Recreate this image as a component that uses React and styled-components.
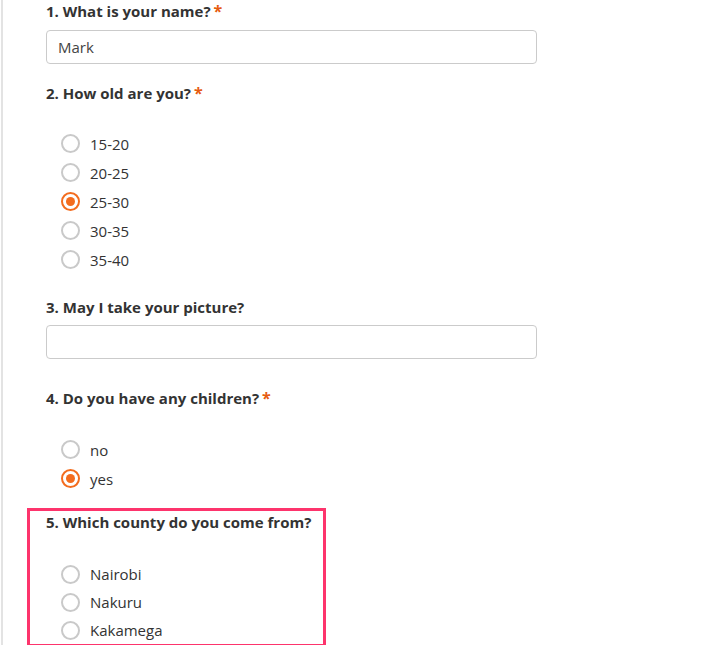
import React, { useState } from 'react'
import styled, { createGlobalStyle } from 'styled-components'

const GlobalStyle = createGlobalStyle`
  html, body {
    margin: 0;
    padding: 0;
    background: #fff;
  }
  body {
    font-family: "Open Sans", "Liberation Sans", sans-serif;
    color: #333;
  }
`

const Page = styled.div`
  margin-left: 1px;
  height: 645px;
  border-left: 2px solid #e3e3e3;
  padding-left: 24px;
  padding-top: 1px;
  box-sizing: border-box;
`

const Question = styled.div`
  margin-top: ${props => props.$top || 0}px;
  box-sizing: border-box;
  padding-left: ${props => props.$highlight ? 16 : 19}px;
  width: ${props => props.$highlight ? '299px' : 'auto'};
  border: ${props => props.$highlight ? '3px solid #fd346c' : 'none'};
  padding-top: ${props => props.$highlight ? 1 : 0}px;
`

const Title = styled.div`
  font-size: 15px;
  font-weight: 700;
  line-height: 20px;
  color: #333;
  white-space: nowrap;
`

const Required = styled.span`
  color: #e65b0f;
  margin-left: 3px;
  font-size: 16px;
`

const TextInput = styled.input`
  display: block;
  box-sizing: border-box;
  width: 491px;
  height: 34px;
  margin: ${props => props.$top || 9}px 0 0;
  padding: 0 11px;
  border: 1px solid #cbcbcb;
  border-radius: 4px;
  font-family: "Open Sans", "Liberation Sans", sans-serif;
  font-size: 15px;
  color: #444;
  outline: none;
`

const Options = styled.div`
  margin-top: ${props => props.$top || 26}px;
  display: flex;
  flex-direction: column;
`

const Option = styled.label`
  display: flex;
  align-items: center;
  height: ${props => props.$row || 29}px;
  padding-left: 15px;
  gap: 10px;
  font-size: 15px;
  line-height: 20px;
  color: #333;
  cursor: pointer;
`

const Radio = styled.span`
  flex: none;
  width: 19px;
  height: 19px;
  box-sizing: border-box;
  border-radius: 50%;
  border: 2px solid ${props => props.$checked ? '#f36c1e' : '#c9c9c9'};
  display: flex;
  align-items: center;
  justify-content: center;

  &::after {
    content: '';
    width: 9px;
    height: 9px;
    border-radius: 50%;
    background: #f36c1e;
    display: ${props => props.$checked ? 'block' : 'none'};
  }
`

function RadioGroup({ options, value, onChange, top, row }) {
  return (
    <Options $top={top}>
      {options.map(o => (
        <Option key={o} $row={row} onClick={() => onChange(o)}>
          <Radio $checked={value === o} />
          {o}
        </Option>
      ))}
    </Options>
  )
}

export default function App() {
  const [name, setName] = useState('Mark')
  const [age, setAge] = useState('25-30')
  const [picture, setPicture] = useState('')
  const [children, setChildren] = useState('yes')
  const [county, setCounty] = useState('')

  return (
    <>
      <GlobalStyle />
      <Page>
        <Question>
          <Title>1. What is your name?<Required>*</Required></Title>
          <TextInput value={name} onChange={e => setName(e.target.value)} />
        </Question>

        <Question $top={19}>
          <Title>2. How old are you?<Required>*</Required></Title>
          <RadioGroup
            options={['15-20', '20-25', '25-30', '30-35', '35-40']}
            value={age}
            onChange={setAge}
          />
        </Question>

        <Question $top={23}>
          <Title>3. May I take your picture?</Title>
          <TextInput $top={8} value={picture} onChange={e => setPicture(e.target.value)} />
        </Question>

        <Question $top={29}>
          <Title>4. Do you have any children?<Required>*</Required></Title>
          <RadioGroup top={27} options={['no', 'yes']} value={children} onChange={setChildren} />
        </Question>

        <Question $top={15} $highlight>
          <Title>5. Which county do you come from?</Title>
          <RadioGroup
            top={28}
            row={28}
            options={['Nairobi', 'Nakuru', 'Kakamega']}
            value={county}
            onChange={setCounty}
          />
        </Question>
      </Page>
    </>
  )
}
